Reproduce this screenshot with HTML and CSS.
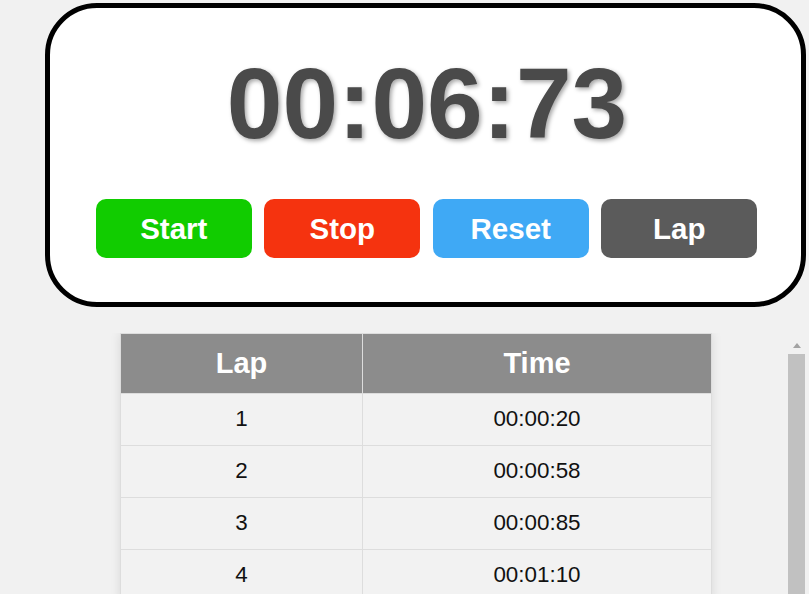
FILE: index.html
```html
<!DOCTYPE html>
<html lang="en">
<head>
<meta charset="utf-8">
<title>Stopwatch</title>
<link rel="stylesheet" href="styles.css">
</head>
<body>
  <div class="watch">
    <div class="display">00:06:73</div>
    <div class="controls">
      <button class="btn btn-start">Start</button>
      <button class="btn btn-stop">Stop</button>
      <button class="btn btn-reset">Reset</button>
      <button class="btn btn-lap">Lap</button>
    </div>
  </div>
  <div class="laps-wrap">
    <div class="laps-view">
      <table class="laps">
        <colgroup><col class="col-lap"><col class="col-time"></colgroup>
        <thead>
          <tr><th>Lap</th><th>Time</th></tr>
        </thead>
        <tbody>
          <tr><td>1</td><td>00:00:20</td></tr>
          <tr><td>2</td><td>00:00:58</td></tr>
          <tr><td>3</td><td>00:00:85</td></tr>
          <tr><td>4</td><td>00:01:10</td></tr>
        </tbody>
      </table>
    </div>
    <div class="scrollbar">
      <div class="sb-up"><span class="sb-arrow"></span></div>
      <div class="sb-thumb"></div>
    </div>
  </div>
</body>
</html>
```
FILE: styles.css
```css
html, body {
  margin: 0;
  padding: 0;
  overflow: hidden;
  height: 100%;
}
body {
  background: #f1f1f1;
  font-family: "Liberation Sans", Arial, sans-serif;
}
.watch {
  box-sizing: border-box;
  width: 761px;
  margin: 3px 0 0 45px;
  border: 5px solid #000;
  border-radius: 52px;
  background: #fff;
  padding: 45px 0 44px;
}
.display {
  font-size: 100px;
  line-height: 100px;
  font-weight: bold;
  color: #4a4a4a;
  text-align: center;
  text-shadow: 2px 2px 4px rgba(0, 0, 0, 0.35);
  padding-left: 3px;
}
.controls {
  display: flex;
  justify-content: center;
  gap: 12.5px;
  margin-top: 46px;
  padding-left: 2px;
}
.btn {
  width: 156px;
  height: 59px;
  border: none;
  border-radius: 10px;
  color: #fff;
  font-family: "Liberation Sans", Arial, sans-serif;
  font-weight: bold;
  font-size: 29.5px;
  padding: 0;
}
.btn-start { background: #11cc00; }
.btn-stop { background: #f5330f; }
.btn-reset { background: #3fa9f5; }
.btn-lap { background: #5b5b5b; }
.laps-wrap {
  display: flex;
  width: 761px;
  height: 275px;
  margin: 26px 0 0 44px;
  overflow: hidden;
}
.laps-view {
  flex: 1;
}
.laps {
  width: 591px;
  margin: 0 auto;
  border-collapse: collapse;
  table-layout: fixed;
  background: #f2f2f2;
  box-shadow: 0 0 10px rgba(0, 0, 0, 0.1);
}
.col-lap { width: 242px; }
.col-time { width: 349px; }
.laps th {
  background: #8c8c8c;
  color: #fff;
  font-size: 29px;
  font-weight: bold;
  height: 59px;
  padding: 0;
  border: 1px solid #dddddd;
  text-align: center;
}
.laps td {
  height: 49px;
  padding: 0 0 2px;
  font-size: 22.4px;
  color: #111;
  text-align: center;
  border: 1px solid #dddddd;
}
.scrollbar {
  width: 17px;
  margin-top: 4px;
  display: flex;
  flex-direction: column;
}
.sb-up {
  height: 17px;
  display: flex;
  align-items: center;
  justify-content: center;
}
.sb-arrow {
  width: 0;
  height: 0;
  border-left: 4.5px solid transparent;
  border-right: 4.5px solid transparent;
  border-bottom: 5px solid #a3a3a3;
}
.sb-thumb {
  flex: 1;
  background: #c1c1c1;
}
```
